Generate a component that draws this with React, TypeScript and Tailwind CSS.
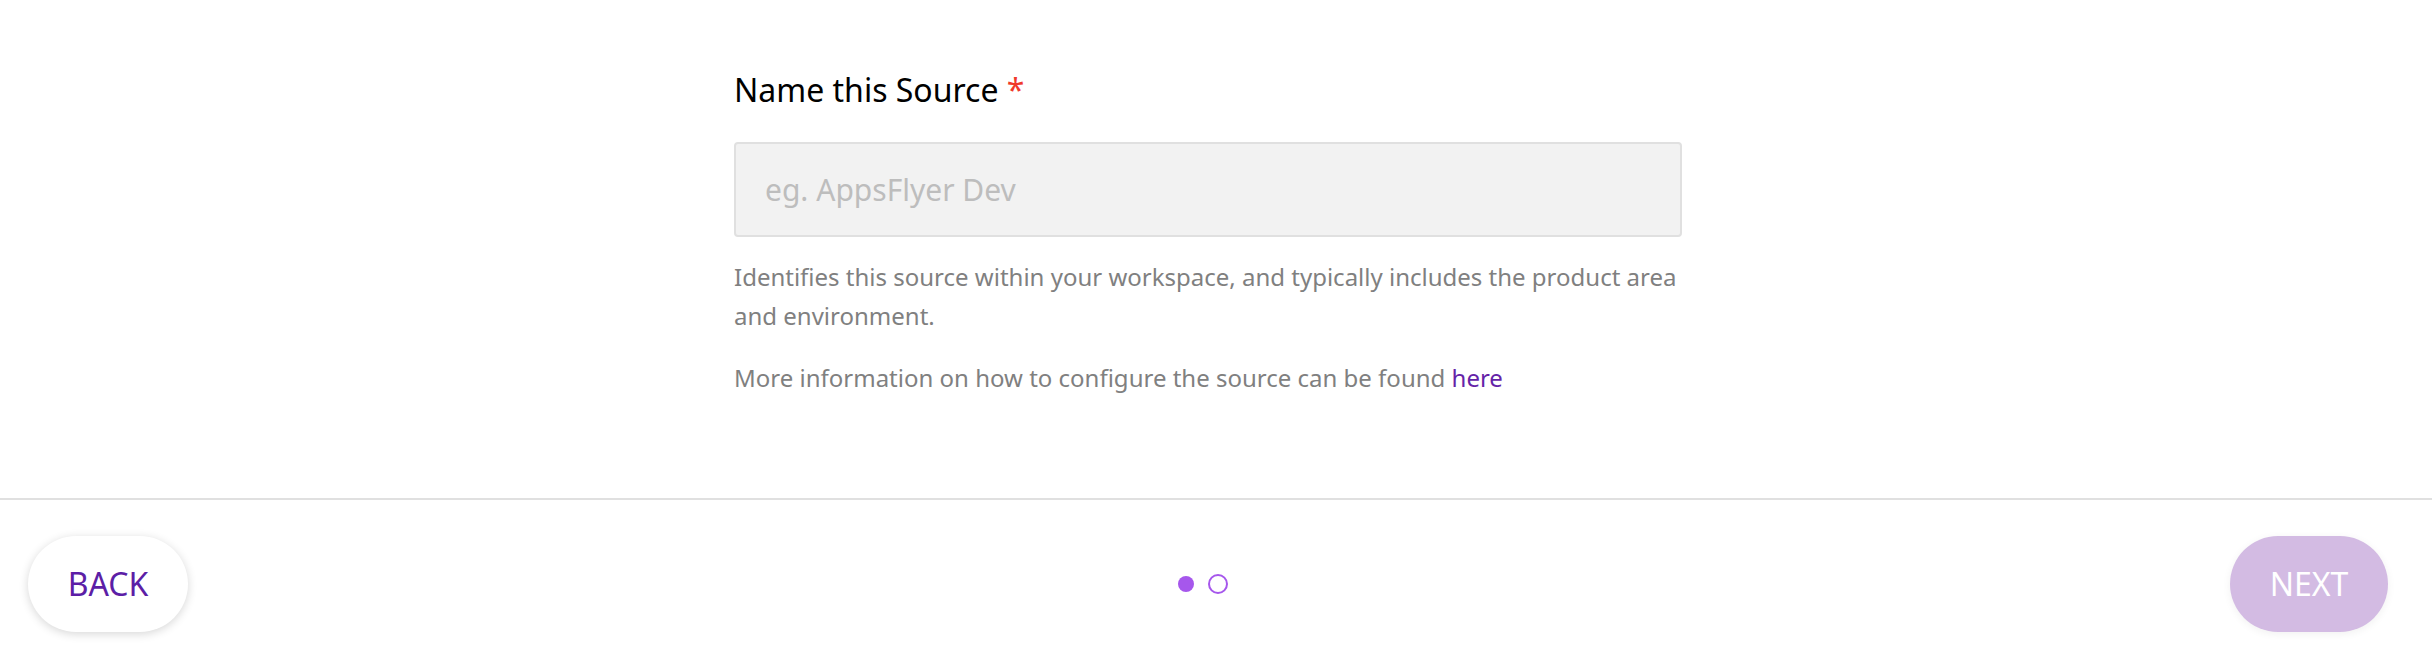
import React from "react";

export default function App() {
  return (
    <div
      className="w-[2432px] h-[652px] bg-white overflow-hidden flex flex-col"
      style={{ fontFamily: '"Noto Sans", "Open Sans", sans-serif' }}
    >
      <div className="h-[498px] pr-[16px]">
        <div className="w-[948px] mx-auto pt-[68px]">
          <div className="text-[32px] leading-[44px] text-black">
            Name this Source <span className="text-[#f0392b]">*</span>
          </div>
          <div className="mt-[30px] h-[95px] w-full rounded-[4px] border-2 border-[#e0e0e0] bg-[#f2f2f2] flex items-center pl-[29px]">
            <input
              className="w-full bg-transparent outline-none text-[30px] text-[#333] placeholder:text-[#bdbdbd]"
              placeholder="eg. AppsFlyer Dev"
            />
          </div>
          <p className="mt-[20px] text-[24px] leading-[39px] text-[#808080]">
            Identifies this source within your workspace, and typically includes the product area and environment.
          </p>
          <p className="mt-[23px] text-[24px] leading-[39px] text-[#808080]">
            More information on how to configure the source can be found{" "}
            <a className="text-[#6523a8]" href="#">here</a>
          </p>
        </div>
      </div>
      <div className="border-t-2 border-[#e0e0e0] flex-1 flex items-start justify-between pl-[28px] pr-[44px] pt-[36px]">
        <button className="w-[160px] h-[96px] rounded-full bg-white text-[32px] text-[#5c1ea6] shadow-[0_2px_10px_rgba(0,0,0,0.16)]">
          BACK
        </button>
        <div className="h-[96px] flex items-center gap-[14px] mr-[12px]">
          <span className="w-[16px] h-[16px] rounded-full bg-[#a657ec]" />
          <span className="w-[20px] h-[20px] rounded-full border-2 border-[#a657ec]" />
        </div>
        <button className="w-[158px] h-[96px] rounded-full bg-[#d3bbe3] text-[32px] text-white shadow-[0_2px_8px_rgba(0,0,0,0.06)]">
          NEXT
        </button>
      </div>
    </div>
  );
}
